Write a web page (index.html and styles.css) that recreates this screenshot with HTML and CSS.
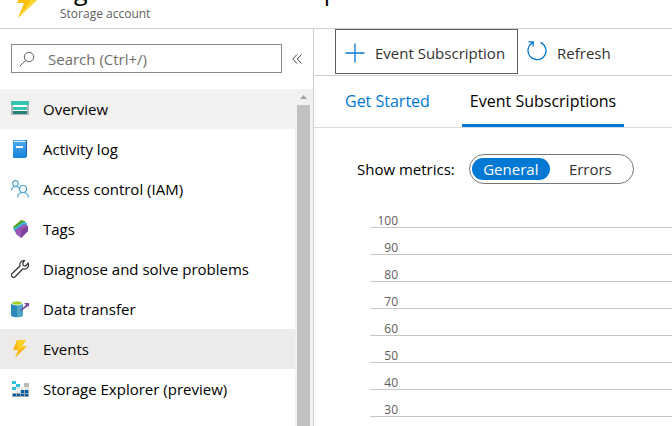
FILE: index.html
```html
<!DOCTYPE html>
<html lang="en">
<head>
<meta charset="utf-8">
<title>Storage account - Events</title>
<link rel="stylesheet" href="styles.css">
</head>
<body>
<header class="page-header">
  <svg class="header-icon" viewBox="0 0 24 30" aria-hidden="true"><path d="M8 0h14l-6 10h7L2 30l6-15H1z" fill="#fdc00f"/><path d="M16 10h7L2 30z" fill="#ffd52e"/></svg>
  <div class="heading">
    <h1 class="title"><span>eg</span><span>p</span></h1>
    <p class="subtitle">Storage account</p>
  </div>
</header>
<div class="workspace">
  <aside class="sidebar">
    <div class="search-row">
      <label class="search">
        <svg class="search-icon" viewBox="0 0 16 16" aria-hidden="true"><circle cx="10" cy="6" r="4.7"/><path d="M6.7 9.3L.7 15.3"/></svg>
        <input type="search" placeholder="Search (Ctrl+/)" aria-label="Search">
      </label>
      <button class="collapse" type="button" aria-label="Collapse menu"><svg viewBox="0 0 10 10" aria-hidden="true"><path d="M5 .5L.8 5 5 9.500M9.500.5L5.300 5l4.200 4.500"/></svg></button>
    </div>
    <div class="menu-area">
      <nav class="menu">
        <a class="item hovered" href="#"><svg viewBox="0 0 18 18"><path d="M0 5h18v10H0z" fill="#b8b8b8"/><path d="M2 5h14v9H2z" fill="#fff"/><path d="M0 1h18v4H0z" fill="#37c2b1"/><path d="M2 7h14v3H2z" fill="#37c2b1"/><path d="M2 11h14v3H2z" fill="#258277"/></svg>Overview</a>
        <a class="item" href="#"><svg viewBox="0 0 18 18"><defs><linearGradient id="book" x2="0" y2="1"><stop stop-color="#4eacf3"/><stop offset="1" stop-color="#1683d9"/></linearGradient></defs><path d="M4 0h11q1 0 1 1v15q0 1-1 1H4z" fill="#0f5ea8"/><path d="M3 1h12v15H3z" fill="#dceeff"/><path d="M3 0h11v1H3v1h12v16H3q-1 0-1-1V1q0-1 1-1z" fill="url(#book)"/><path d="M5 6h7v2H5z" fill="#fff"/></svg>Activity log</a>
        <a class="item" href="#"><svg class="people" viewBox="0 0 18 18"><circle cx="4.500" cy="3.500" r="2.800"/><circle cx="12" cy="9" r="3.500"/><path d="M.6 10.500C.6 7.500 2 6.500 4.500 6.500q2.500 0 4 2M6.600 17.500c.2-3 2-5 5.400-5s5.200 2 5.400 5"/></svg>Access control (IAM)</a>
        <a class="item" href="#"><svg viewBox="0 0 18 18"><path d="M2 7l8-7 4 1v6l-8 7z" fill="#5aa51e"/><path d="M2 9l10-7 4 1v7l-8 6z" fill="#38b5df"/><path d="M4 10l9-6 4 2v5l-7 7-5-4z" fill="#9658b2"/><path d="M10 10l7-4v5l-7 7z" fill="#7d4299"/></svg>Tags</a>
        <a class="item" href="#"><svg class="wrench" viewBox="0 0 18 18"><path d="M13.500.6A4.200 4.200 0 0 0 9 6L1.100 13.500a2 2 0 0 0 3 3.200L12 8.800a4.200 4.200 0 0 0 5.200-5.600L14.600 6 12.200 5.600 11.800 3.200z"/></svg>Diagnose and solve problems</a>
        <a class="item" href="#"><svg viewBox="0 0 18 18"><path d="M0 3v12c0 3 12 3 12 0V3z" fill="#298ab8"/><path d="M6 3h6v12q0 2-6 2z" fill="#50a6c8"/><ellipse cx="6" cy="3" rx="6" ry="2.500" fill="#def2f4"/><ellipse cx="6" cy="3" rx="4.500" ry="1.600" fill="#a4cf18"/><path d="M9 10l6-5-2-2h6v5l-2-2-7 5z" fill="#804998"/></svg>Data transfer</a>
        <a class="item selected" href="#"><svg viewBox="0 0 18 18"><path d="M6 0h9l-4 6h5L4 18l3-8H2z" fill="#f9b715"/><path d="M6 0h9l-4 6h5l-9 4z" fill="#ffd126"/></svg>Events</a>
        <a class="item" href="#"><svg viewBox="0 0 18 18"><path d="M5 7h13v6H5z" fill="#e4e4e4"/><path d="M13 3h5v4h-5z" fill="#b9b9b9"/><path d="M1 1h4v3H1zM5 4h4v3H5zM1 7h4v3H1z" fill="#32bedd"/><path d="M1 13h17v4H1zM9 10h9v3H9z" fill="#9aa9b4"/><path d="M2 14h3v2H2zM6 14h3v2H6zM10 14h3v2h-3zM14 14h3v2h-3zM10 10h3v3h-3zM14 10h3v3h-3z" fill="#005ba1"/><path d="M5 10h4M9 7v6M13 7v3" stroke="#fff"/></svg>Storage Explorer (preview)</a>
      </nav>
      <div class="scrollbar" aria-hidden="true"><svg viewBox="0 0 7 4"><path d="M3.500 0L7 4H0z"/></svg><div class="thumb"></div></div>
    </div>
  </aside>
  <main class="content">
    <div class="toolbar">
      <button class="command focused" type="button"><svg viewBox="0 0 20 20"><path d="M10 .5v19M.5 10h19"/></svg>Event Subscription</button>
      <button class="command" type="button"><svg class="refresh" viewBox="0 0 20 20"><path d="M5.500 1.800A9 9 0 1 0 13.500 1.300M1.500.8h4.700v4.700M6 1L2 5"/></svg>Refresh</button>
    </div>
    <nav class="tabs"><a class="tab" href="#">Get Started</a><a class="tab active" href="#">Event Subscriptions</a></nav>
    <section class="metrics">
      <div class="filter"><span>Show metrics:</span>
        <div class="switch"><button class="option chosen" type="button">General</button><button class="option" type="button">Errors</button></div>
      </div>
      <div class="chart">
        <div class="tick"><span>100</span></div><div class="tick"><span>90</span></div><div class="tick"><span>80</span></div><div class="tick"><span>70</span></div><div class="tick"><span>60</span></div><div class="tick"><span>50</span></div><div class="tick"><span>40</span></div><div class="tick"><span>30</span></div>
      </div>
    </section>
  </main>
</div>
</body>
</html>
```
FILE: styles.css
```css
* { box-sizing: border-box; }
body { margin: 0; height: 100vh; overflow: hidden; display: flex; flex-direction: column; background: #fff; color: #000; font: 15px/20px "Open Sans", "Noto Sans", sans-serif; }
button { font: inherit; color: inherit; border: 0; background: none; padding: 0; }
a { color: inherit; text-decoration: none; }
svg { display: block; flex: none; fill: none; }

.page-header { display: flex; align-items: flex-end; flex: none; height: 29px; overflow: hidden; padding: 0 16px 6px; border-bottom: 1px solid #d2d0ce; }
.header-icon { width: 24px; height: 30px; margin-bottom: 4px; }
.heading { margin-left: 20px; }
.title { display: flex; gap: 236px; margin: 0; font-size: 25px; line-height: 32px; font-weight: 400; }
.subtitle { margin: 0; font-size: 12px; line-height: 16px; color: #605e5c; }

.workspace { flex: 1; display: flex; min-height: 0; }
.sidebar { flex: none; width: 314px; display: flex; flex-direction: column; border-right: 1px solid #d2d0ce; }
.search-row { display: flex; align-items: center; gap: 10px; padding: 15px 11px 16px; }
.search { flex: 1; display: flex; align-items: center; gap: 13px; height: 29px; padding: 0 7px; border: 1px solid #8a8886; }
.search-icon { width: 16px; height: 16px; stroke: #605e5c; }
.search input { flex: 1; min-width: 0; border: 0; padding: 0; outline: 0; background: none; font: inherit; }
.search input::placeholder { color: #706e6c; opacity: 1; }
.collapse svg { width: 10px; height: 10px; stroke: #484644; }
.menu-area { flex: 1; display: flex; min-height: 0; }
.menu { flex: 1; overflow: hidden; }
.item { display: flex; align-items: center; gap: 14px; height: 40px; padding-left: 11px; }
.item svg { width: 18px; height: 18px; }
.hovered { background: #f3f2f1; }
.selected { background: #edebe9; }
.people { stroke: #4ba3cc; stroke-width: 1.200; }
.wrench { stroke: #323130; stroke-width: 1.200; }
.scrollbar { width: 18px; display: flex; flex-direction: column; align-items: center; padding: 6px 3px 0 2px; gap: 6px; background: #f1f1f1; }
.scrollbar svg { width: 7px; height: 4px; fill: #a3a3a3; }
.thumb { flex: 1; width: 13px; background: #c1c1c1; }

.content { flex: 1; min-width: 0; display: flex; flex-direction: column; }
.toolbar { display: flex; flex: none; height: 47px; padding: 0 21px 1px; border-bottom: 1px solid #d2d0ce; }
.command { display: flex; align-items: center; gap: 10px; padding: 3px 12px 0 9px; color: #323130; }
.command svg { width: 20px; height: 20px; stroke: #0078d4; stroke-width: 1.300; }
.command .refresh { margin-bottom: 4px; }
.focused { border: 1px solid #605e5c; }
.tabs { display: flex; flex: none; gap: 24px; height: 52px; padding: 0 23px; border-bottom: 1px solid #d6dce4; font-size: 16px; }
.tab { padding: 15px 8px 0; color: #0078d4; }
.active { color: #000; border-bottom: 3px solid #0078d4; }
.metrics { padding: 26px 0 0 43px; }
.filter { display: flex; align-items: center; gap: 14px; }
.switch { display: flex; height: 30px; padding: 3px 2px; border: 1px solid #797775; border-radius: 15px; }
.option { width: 81px; border-radius: 11px; color: #323130; }
.chosen { width: 78px; background: #0078d4; color: #fff; }
.chart { margin: 17px 0 0 13px; }
.tick { display: flex; align-items: flex-end; height: 27px; border-bottom: 1px solid #c8c6c4; font-size: 12px; line-height: 12px; color: #605e5c; }
.tick span { width: 28px; text-align: right; }
```
